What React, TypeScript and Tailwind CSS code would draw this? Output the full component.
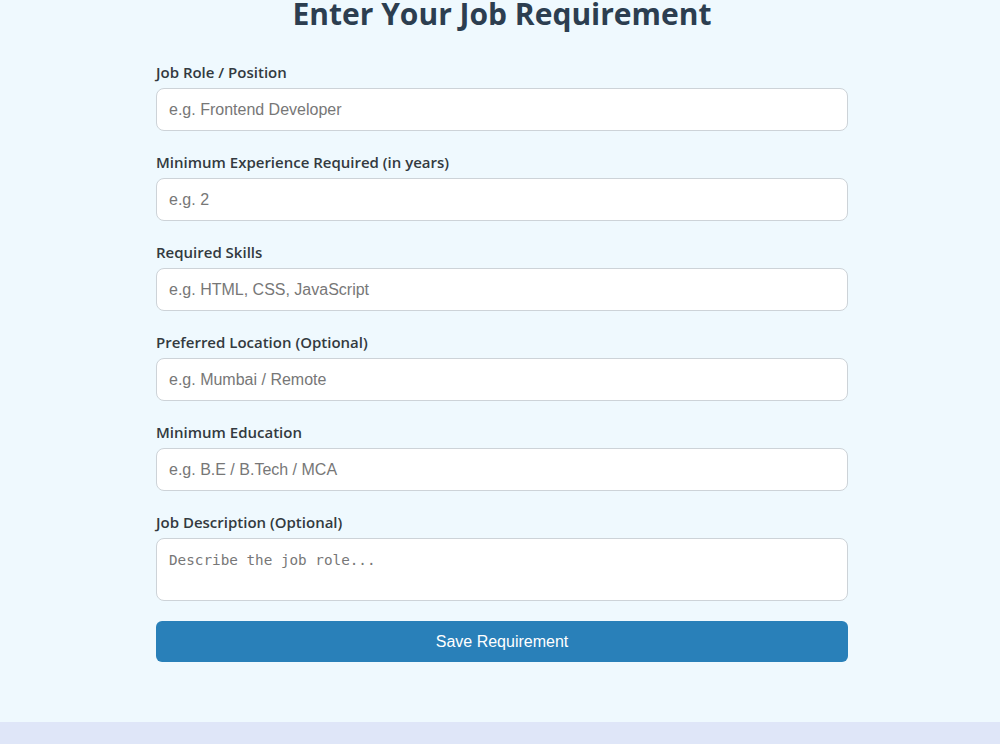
import React from 'react';

const fields = [
  { label: 'Job Role / Position', name: 'role', placeholder: 'e.g. Frontend Developer' },
  { label: 'Minimum Experience Required (in years)', name: 'experience', placeholder: 'e.g. 2' },
  { label: 'Required Skills', name: 'skills', placeholder: 'e.g. HTML, CSS, JavaScript' },
  { label: 'Preferred Location (Optional)', name: 'location', placeholder: 'e.g. Mumbai / Remote' },
  { label: 'Minimum Education', name: 'education', placeholder: 'e.g. B.E / B.Tech / MCA' },
];

const labelClass =
  "block mb-[6px] text-[15px] leading-[20px] font-semibold text-[#333a40] font-['Open_Sans',sans-serif]";

export default function App() {
  return (
    <div className="min-h-screen bg-[#dfe6f8]">
      <section className="bg-[#eff9fe] pb-[60px] pl-1">
        <h1 className="-mt-[6px] mb-[28px] text-center text-[30px] leading-[40px] font-bold text-[#2c3e50] font-['Open_Sans',sans-serif]">
          Enter Your Job Requirement
        </h1>

        <form className="mx-auto w-[692px] flex flex-col gap-[21px]">
          {fields.map((f) => (
            <div key={f.name}>
              <label className={labelClass}>{f.label}</label>
              <input
                name={f.name}
                placeholder={f.placeholder}
                className="w-full h-[43px] px-3 rounded-lg border border-[#cdd3d8] bg-white text-[16px] font-['Liberation_Sans',Arial,sans-serif] placeholder:text-[#777] outline-none"
              />
            </div>
          ))}

          <div>
            <label className={labelClass}>Job Description (Optional)</label>
            <textarea
              name="description"
              placeholder="Describe the job role..."
              className="block w-full h-[63px] px-3 py-[12px] rounded-lg border border-[#cdd3d8] bg-white text-[14.3px] leading-[18px] font-['DejaVu_Sans_Mono',monospace] placeholder:text-[#777] outline-none resize-none"
            />
          </div>

          <button
            type="button"
            className="-mt-[1px] h-[41px] w-full rounded-md bg-[#2980b9] text-white text-[16px] font-['Liberation_Sans',Arial,sans-serif]"
          >
            Save Requirement
          </button>
        </form>
      </section>
    </div>
  );
}
